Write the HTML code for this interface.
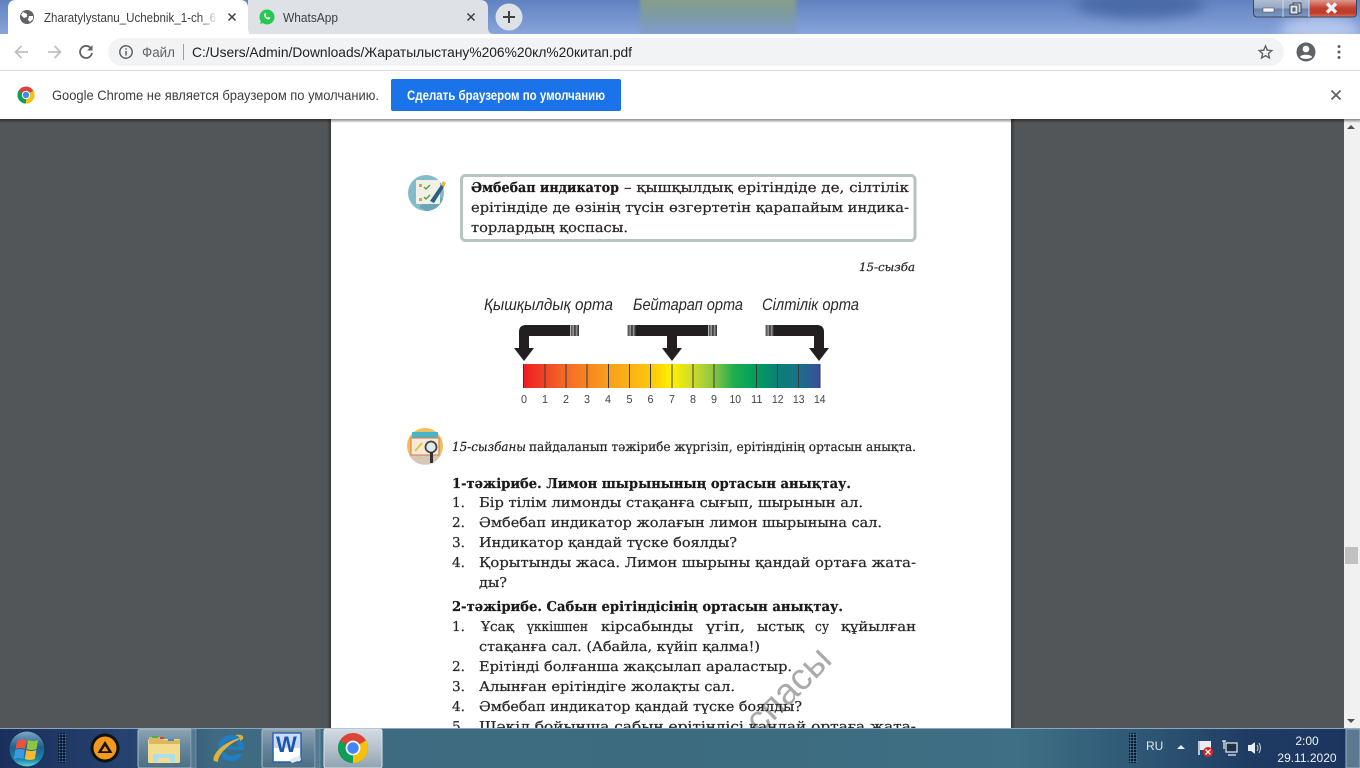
<!DOCTYPE html>
<html><head><meta charset="utf-8"><title>PDF</title>
<style>
html,body{margin:0;padding:0;width:1360px;height:768px;overflow:hidden;background:#525659}
svg{display:block}
.ui{font-family:"Liberation Sans",sans-serif;fill:#3c4043}
.s{font-family:"DejaVu Serif","Liberation Serif",serif;font-size:13.5px;fill:#262626;stroke:#262626;stroke-width:.22px;text-rendering:geometricPrecision}
.b{font-weight:bold;fill:#1a1a1a;stroke:#1a1a1a}
.i{font-style:italic}
.d{font-family:"Liberation Sans",sans-serif;font-style:italic;font-size:16.5px;fill:#2a2a2a;text-rendering:geometricPrecision}
.n{font-family:"Liberation Sans",sans-serif;font-size:11.5px;fill:#444;text-rendering:geometricPrecision}
</style></head><body>
<svg width="1360" height="768" viewBox="0 0 1360 768" xmlns="http://www.w3.org/2000/svg">
<defs>
<linearGradient id="sky" x1="0" y1="0" x2="0" y2="1"><stop offset="0" stop-color="#5f82c0"/><stop offset="1" stop-color="#88a4db"/></linearGradient>
<linearGradient id="green" x1="0" y1="0" x2="0" y2="1"><stop offset="0" stop-color="#8ca37a"/><stop offset=".55" stop-color="#7d9aa0"/><stop offset="1" stop-color="#7f9dd0"/></linearGradient>
<filter id="blur" x="-20%" y="-50%" width="140%" height="200%"><feGaussianBlur stdDeviation="6"/></filter>
<filter id="blur2" x="-20%" y="-50%" width="140%" height="200%"><feGaussianBlur stdDeviation="2"/></filter>
<linearGradient id="ph" x1="0" y1="0" x2="1" y2="0">
<stop offset="0" stop-color="#ed1c24"/><stop offset=".14" stop-color="#f26a27"/><stop offset=".29" stop-color="#f8a01c"/><stop offset=".43" stop-color="#fdc60c"/><stop offset=".5" stop-color="#fff200"/><stop offset=".57" stop-color="#cfdc2b"/><stop offset=".64" stop-color="#8dc63f"/><stop offset=".71" stop-color="#1fae4e"/><stop offset=".78" stop-color="#009f5b"/><stop offset=".86" stop-color="#0a8077"/><stop offset=".93" stop-color="#187189"/><stop offset="1" stop-color="#3f4c9b"/></linearGradient>
<linearGradient id="tb" x1="0" y1="0" x2="1" y2="0">
<stop offset="0" stop-color="#1a2f5c"/><stop offset=".1" stop-color="#274470"/><stop offset=".16" stop-color="#3f6b82"/><stop offset=".5" stop-color="#3c6b7f"/><stop offset=".75" stop-color="#3e6f84"/><stop offset=".85" stop-color="#2c5473"/><stop offset=".92" stop-color="#1f3b62"/><stop offset="1" stop-color="#1c3460"/></linearGradient>
<linearGradient id="btn" x1="0" y1="0" x2="0" y2="1"><stop offset="0" stop-color="#8ea4b4"/><stop offset=".5" stop-color="#64849a"/><stop offset="1" stop-color="#4d6f86"/></linearGradient>
<linearGradient id="btn2" x1="0" y1="0" x2="0" y2="1"><stop offset="0" stop-color="#d3dbe1"/><stop offset=".5" stop-color="#b4c2cc"/><stop offset="1" stop-color="#8ea3b2"/></linearGradient>
<linearGradient id="shade" x1="0" y1="0" x2="0" y2="1"><stop offset="0" stop-color="#000" stop-opacity=".45"/><stop offset="1" stop-color="#000" stop-opacity="0"/></linearGradient>
<linearGradient id="ls" x1="0" y1="0" x2="1" y2="0"><stop offset="0" stop-color="#000" stop-opacity=".35"/><stop offset="1" stop-color="#000" stop-opacity="0"/></linearGradient>
<linearGradient id="orb" x1="0" y1="0" x2="0" y2="1"><stop offset="0" stop-color="#7ea6c6"/><stop offset=".45" stop-color="#1f5f8e"/><stop offset=".8" stop-color="#1d86a8"/><stop offset="1" stop-color="#5fd0e0"/></linearGradient>
<linearGradient id="close" x1="0" y1="0" x2="0" y2="1"><stop offset="0" stop-color="#dc9a8e"/><stop offset=".5" stop-color="#c2402f"/><stop offset=".8" stop-color="#c23a2c"/><stop offset="1" stop-color="#d8705e"/></linearGradient>
<linearGradient id="wb" x1="0" y1="0" x2="0" y2="1"><stop offset="0" stop-color="#b4c0d4"/><stop offset=".5" stop-color="#98a8c2"/><stop offset=".55" stop-color="#6a84ad"/><stop offset="1" stop-color="#7f98c4"/></linearGradient>
<linearGradient id="fade" x1="0" y1="0" x2="1" y2="0"><stop offset="0" stop-color="#fff" stop-opacity="0"/><stop offset="1" stop-color="#fff"/></linearGradient>
<linearGradient id="stL" x1="0" y1="0" x2="1" y2="0"><stop offset="0" stop-color="#222"/><stop offset=".3" stop-color="#999"/><stop offset=".45" stop-color="#222"/><stop offset=".65" stop-color="#aaa"/><stop offset=".8" stop-color="#444"/><stop offset="1" stop-color="#ddd"/></linearGradient>
<linearGradient id="stR" x1="1" y1="0" x2="0" y2="0"><stop offset="0" stop-color="#222"/><stop offset=".3" stop-color="#999"/><stop offset=".45" stop-color="#222"/><stop offset=".65" stop-color="#aaa"/><stop offset=".8" stop-color="#444"/><stop offset="1" stop-color="#ddd"/></linearGradient>
<pattern id="dots" width="3" height="3" patternUnits="userSpaceOnUse"><rect width="2" height="2" fill="#0d1a30"/><rect x="2" y="2" width="1" height="1" fill="#5a7590"/></pattern>
<g id="chrome">
<circle r="10" fill="#db4437"/>
<path d="M0,0L8.66,-5A10,10 0 0 1 0,10Z" fill="#f4c20d"/>
<path d="M0,0L0,10A10,10 0 0 1 -8.66,-5Z" fill="#0f9d58"/>
<circle r="4.9" fill="#fff"/><circle r="3.8" fill="#4285f4"/>
</g>
<clipPath id="vp"><rect x="0" y="119" width="1344" height="609"/></clipPath>
</defs>

<!-- title bar -->
<svg x="0" y="0" width="1360" height="34">
<rect width="1360" height="34" fill="url(#sky)"/>
<rect x="640" y="-10" width="156" height="44" fill="url(#green)" filter="url(#blur2)"/>
<ellipse cx="1140" cy="4" rx="65" ry="14" fill="#4a6aa8" filter="url(#blur)"/>
<ellipse cx="1320" cy="30" rx="40" ry="14" fill="#b4c6ec" filter="url(#blur)"/>
</svg>
<path d="M0,34H8V8Q8,0 16,0H240Q248,0 248,8V26Q248,34 256,34H0Z" fill="#fff"/>
<path d="M248,0H480Q488,0 488,8V28Q488,34 494,34H248Q250,34 248,30Z" fill="#dee1e6"/>
<circle cx="509" cy="17" r="13.5" fill="#dee1e6"/>
<path d="M509,11V23M503,17H515" stroke="#3c4043" stroke-width="2"/>
<circle cx="27" cy="17" r="7" fill="#5f6368"/>
<path d="M23,12l4,2 0,3 -3,1 -3,-3zM29,16l4,0 0,3 -3,3 -2,-2z" fill="#fff"/>
<text class="ui" x="44" y="22" font-size="13" textLength="172" lengthAdjust="spacingAndGlyphs">Zharatylystanu_Uchebnik_1-ch_6</text>
<rect x="200" y="8" width="18" height="18" fill="url(#fade)"/>
<path d="M228.500,13.500l7,7M235.500,13.500l-7,7" stroke="#3c4043" stroke-width="1.500"/>
<circle cx="267" cy="17" r="7.500" fill="#25c94f"/><path d="M260,24l1.500,-4.500 3,3z" fill="#25c94f"/>
<path d="M264.500,13.500c-1,1 -.5,3 1,4.500s3.500,2 4.500,1l.3,-1.300 -1.700,-.8 -.8,.8c-1,-.3 -2,-1.300 -2.300,-2.300l.8,-.8 -.8,-1.700z" fill="#fff"/>
<text class="ui" x="283" y="22" font-size="13" textLength="55" lengthAdjust="spacingAndGlyphs">WhatsApp</text>
<path d="M467.500,13.500l7,7M474.500,13.500l-7,7" stroke="#3c4043" stroke-width="1.500"/>
<!-- window buttons -->
<path d="M1253.500,-1H1356.500V13Q1356.500,17 1352.500,17H1257.500Q1253.500,17 1253.500,13Z" fill="url(#wb)" stroke="#39465c" stroke-width="1"/>
<path d="M1309,0H1356V13Q1356,16.500 1352.500,16.500H1309Z" fill="url(#close)"/>
<path d="M1283,0V17M1309,0V17" stroke="#dfe7f0" stroke-width=".8"/>
<rect x="1263" y="8" width="11" height="4" fill="#f3f5f8" stroke="#445" stroke-width=".5"/>
<rect x="1293" y="3" width="8" height="10" fill="#c7d0de" stroke="#334" stroke-width=".9"/>
<rect x="1290" y="5" width="8" height="9" fill="#dfe5ee" stroke="#334" stroke-width=".9"/>
<rect x="1292.500" y="7.500" width="3" height="4" fill="#567"/>
<path d="M1327,3.500l9,9M1336,3.500l-9,9" stroke="#f2f2f2" stroke-width="3.400"/>

<!-- toolbar -->
<rect y="34" width="1360" height="36" fill="#fff"/>
<rect y="70" width="1360" height="1" fill="#dadce0"/>
<path d="M28,52H16M21.500,46l-6,6 6,6" fill="none" stroke="#bdc1c6" stroke-width="1.800"/>
<path d="M48,52H60M54.500,46l6,6 -6,6" fill="none" stroke="#bdc1c6" stroke-width="1.800"/>
<path d="M91,48.500A6,6 0 1 0 92,53" fill="none" stroke="#5f6368" stroke-width="1.800"/><path d="M92.500,45v5.500h-5.500z" fill="#5f6368"/>
<rect x="108" y="38" width="1176" height="28" rx="14" fill="#f1f3f4"/>
<circle cx="126" cy="52" r="6.200" fill="none" stroke="#5f6368" stroke-width="1.500"/>
<path d="M126,51v4.500M126,48.300v1.500" stroke="#5f6368" stroke-width="1.500"/>
<text class="ui" x="142" y="57" font-size="13.500" textLength="33" lengthAdjust="spacingAndGlyphs" style="fill:#5f6368">Файл</text>
<rect x="183" y="44" width="1" height="16" fill="#9aa0a6"/>
<text class="ui" x="192" y="57" font-size="14" textLength="440" lengthAdjust="spacingAndGlyphs" style="fill:#202124">C:/Users/Admin/Downloads/Жаратылыстану%206%20кл%20китап.pdf</text>
<path d="M1265.500,46l1.800,4.200 4.500,.4 -3.400,3 1,4.400 -3.900,-2.300 -3.900,2.300 1,-4.400 -3.400,-3 4.500,-.4z" fill="none" stroke="#5f6368" stroke-width="1.400"/>
<circle cx="1306" cy="52" r="9.500" fill="#5f6368"/><circle cx="1306" cy="49" r="3.300" fill="#fff"/><path d="M1300,57c1,-3 11,-3 12,0c-2,2.500 -10,2.500 -12,0z" fill="#fff"/>
<circle cx="1339" cy="46.500" r="1.500" fill="#5f6368"/><circle cx="1339" cy="52" r="1.500" fill="#5f6368"/><circle cx="1339" cy="57.500" r="1.500" fill="#5f6368"/>

<!-- infobar -->
<rect y="71" width="1360" height="48" fill="#fff"/>
<use href="#chrome" transform="translate(26,95) scale(.85)"/>
<text class="ui" x="52" y="100" font-size="14" textLength="327" lengthAdjust="spacingAndGlyphs">Google Chrome не является браузером по умолчанию.</text>
<rect x="391" y="79" width="230" height="32" rx="2" fill="#1a73e8"/>
<text class="ui" x="407" y="100" font-size="13.500" font-weight="bold" textLength="198" lengthAdjust="spacingAndGlyphs" style="fill:#fff">Сделать браузером по умолчанию</text>
<path d="M1331.500,90.500l9,9M1340.500,90.500l-9,9" stroke="#5f6368" stroke-width="1.800"/>

<!-- viewer -->
<rect y="119" width="1344" height="609" fill="#525659"/>
<rect x="331" y="119" width="680" height="609" fill="#fff"/>
<rect x="1011" y="119" width="4" height="609" fill="url(#ls)"/>
<rect x="327" y="119" width="4" height="609" fill="url(#ls)" transform="rotate(180 329 423.500)"/>
<rect x="1344" y="119" width="16" height="609" fill="#f1f1f1"/>
<rect x="1345" y="547" width="13" height="17" fill="#c1c1c1"/>
<path d="M1351,125l4,4h-8z" fill="#505050"/><path d="M1351,723l4,-4h-8z" fill="#505050"/>
<rect y="119" width="1360" height="4" fill="url(#shade)"/>

<g clip-path="url(#vp)">
<!-- watermark -->
<text x="0" y="0" transform="translate(760,735) rotate(-45)" font-family="Liberation Sans,sans-serif" font-size="37" fill="#aaaaaa" textLength="104" lengthAdjust="spacingAndGlyphs">спасы</text>
<!-- icon 1 -->
<circle cx="426" cy="193" r="18" fill="#82bcc9"/>
<path d="M426,211a18,18 0 0 0 17,-12l-8,-4 -16,12z" fill="#6aa6b4"/>
<rect x="416" y="180" width="24" height="24" rx="1" fill="#f2f0e6"/>
<path d="M419,184h3v3h-3zM419,198h3v3h-3z" fill="#d9a23b"/>
<path d="M424,187l2,2 4,-4M424,197l2,2 4,-4" stroke="#4aa84a" stroke-width="1.500" fill="none"/>
<path d="M430,201l11,-16 3,2 -10,16z" fill="#2d5e85"/><path d="M441,185l2,-4 3,2 -2,4z" fill="#e9b33c"/>

<!-- definition box -->
<rect x="461.500" y="175.500" width="453.500" height="65" rx="4" fill="#fff" stroke="#b6c5c1" stroke-width="3"/>
<text class="s b" x="471" y="192" textLength="148" lengthAdjust="spacingAndGlyphs">Әмбебап индикатор</text>
<text class="s" x="624" y="192" textLength="285" lengthAdjust="spacingAndGlyphs">– қышқылдық ерітіндіде де, сілтілік</text>
<text class="s" x="471" y="212" textLength="438" lengthAdjust="spacingAndGlyphs">ерітіндіде де өзінің түсін өзгертетін қарапайым индика-</text>
<text class="s" x="471" y="232" textLength="157" lengthAdjust="spacingAndGlyphs">торлардың қоспасы.</text>
<text class="s i" x="859" y="271" style="font-size:11.500px" textLength="56" lengthAdjust="spacingAndGlyphs">15-сызба</text>

<!-- diagram -->
<text class="d" x="484" y="310" textLength="129" lengthAdjust="spacingAndGlyphs">Қышқылдық орта</text>
<text class="d" x="633" y="310" textLength="110" lengthAdjust="spacingAndGlyphs">Бейтарап орта</text>
<text class="d" x="762" y="310" textLength="97" lengthAdjust="spacingAndGlyphs">Сілтілік орта</text>
<path d="M570,325H526Q519,325 519,332V348H514L524,361 534,348H529V336H570Z" fill="#231f20"/>
<rect x="570" y="325" width="9" height="11" fill="url(#stR)"/>
<path d="M636,325H708V336H677V348H682L672,361 662,348H667V336H636Z" fill="#231f20"/>
<rect x="627" y="325" width="9" height="11" fill="url(#stL)" transform="rotate(180 631.500 330.500)"/>
<rect x="708" y="325" width="9" height="11" fill="url(#stR)"/>
<path d="M774,325H817Q824,325 824,332V348H829L819,361 809,348H814V336H774Z" fill="#231f20"/>
<rect x="765" y="325" width="9" height="11" fill="url(#stL)" transform="rotate(180 769.500 330.500)"/>
<rect x="523" y="364" width="297" height="24" fill="url(#ph)"/>
<path d="M523.500,364v24M545,364v24M566,364v24M587,364v24M608.500,364v24M629.500,364v24M650.500,364v24M672,364v24M693,364v24M714,364v24M756.500,364v24M777.500,364v24M798.500,364v24M820,364v24" stroke="#3a3a3a" stroke-width="1"/>
<g text-anchor="start">
<text class="n" x="521" y="403" textLength="6" lengthAdjust="spacingAndGlyphs">0</text><text class="n" x="542" y="403" textLength="6" lengthAdjust="spacingAndGlyphs">1</text><text class="n" x="563" y="403" textLength="6" lengthAdjust="spacingAndGlyphs">2</text><text class="n" x="584" y="403" textLength="6" lengthAdjust="spacingAndGlyphs">3</text><text class="n" x="605" y="403" textLength="6" lengthAdjust="spacingAndGlyphs">4</text><text class="n" x="626.500" y="403" textLength="6" lengthAdjust="spacingAndGlyphs">5</text><text class="n" x="647.500" y="403" textLength="6" lengthAdjust="spacingAndGlyphs">6</text><text class="n" x="669" y="403" textLength="6" lengthAdjust="spacingAndGlyphs">7</text><text class="n" x="690" y="403" textLength="6" lengthAdjust="spacingAndGlyphs">8</text><text class="n" x="711" y="403" textLength="6" lengthAdjust="spacingAndGlyphs">9</text><text class="n" x="729.500" y="403" textLength="11.500" lengthAdjust="spacingAndGlyphs">10</text><text class="n" x="751" y="403" textLength="11.500" lengthAdjust="spacingAndGlyphs">11</text><text class="n" x="772" y="403" textLength="11.500" lengthAdjust="spacingAndGlyphs">12</text><text class="n" x="793" y="403" textLength="11.500" lengthAdjust="spacingAndGlyphs">13</text><text class="n" x="814" y="403" textLength="11.500" lengthAdjust="spacingAndGlyphs">14</text>
</g>

<!-- icon 2 -->
<circle cx="425" cy="446" r="18" fill="#efc05a"/>
<path d="M409,454h32v1a18,18 0 0 1 -32,0z" fill="#d5c9b5"/>
<rect x="412" y="432" width="26" height="6" fill="#49b3c7"/>
<rect x="411" y="438" width="28" height="17" fill="#f5ead6" stroke="#d9744f" stroke-width="1"/>
<path d="M415,451l7,-8" stroke="#e8c23a" stroke-width="2"/>
<circle cx="431" cy="447" r="5.500" fill="#dfeaea" stroke="#444" stroke-width="1.800"/>
<rect x="430" y="452" width="3" height="11" fill="#333"/>

<text class="s i" x="452" y="451" style="font-size:12.500px" textLength="74" lengthAdjust="spacingAndGlyphs">15-сызбаны</text>
<text class="s" x="529" y="451" style="font-size:12.500px" textLength="387" lengthAdjust="spacingAndGlyphs">пайдаланып тәжірибе жүргізіп, ерітіндінің ортасын анықта.</text>

<text class="s b" x="452" y="488" textLength="399" lengthAdjust="spacingAndGlyphs">1-тәжірибе. Лимон шырынының ортасын анықтау.</text>
<text class="s" x="452" y="507" textLength="13" lengthAdjust="spacingAndGlyphs">1.</text>
<text class="s" x="479" y="507" textLength="384" lengthAdjust="spacingAndGlyphs">Бір тілім лимонды стақанға сығып, шырынын ал.</text>
<text class="s" x="452" y="527" textLength="13" lengthAdjust="spacingAndGlyphs">2.</text>
<text class="s" x="479" y="527" textLength="403" lengthAdjust="spacingAndGlyphs">Әмбебап индикатор жолағын лимон шырынына сал.</text>
<text class="s" x="452" y="547" textLength="13" lengthAdjust="spacingAndGlyphs">3.</text>
<text class="s" x="479" y="547" textLength="258" lengthAdjust="spacingAndGlyphs">Индикатор қандай түске боялды?</text>
<text class="s" x="452" y="567" textLength="13" lengthAdjust="spacingAndGlyphs">4.</text>
<text class="s" x="479" y="567" textLength="437" lengthAdjust="spacingAndGlyphs">Қорытынды жаса. Лимон шырыны қандай ортаға жата-</text>
<text class="s" x="479" y="587" textLength="28" lengthAdjust="spacingAndGlyphs">ды?</text>

<text class="s b" x="452" y="611" textLength="391" lengthAdjust="spacingAndGlyphs">2-тәжірибе. Сабын ерітіндісінің ортасын анықтау.</text>
<text class="s" x="452" y="631" textLength="13" lengthAdjust="spacingAndGlyphs">1.</text>
<text class="s" x="481" y="631" textLength="33" lengthAdjust="spacingAndGlyphs">Ұсақ</text>
<text class="s" x="527" y="631" textLength="61" lengthAdjust="spacingAndGlyphs">үккішпен</text>
<text class="s" x="601" y="631" textLength="92" lengthAdjust="spacingAndGlyphs">кірсабынды</text>
<text class="s" x="706" y="631" textLength="39" lengthAdjust="spacingAndGlyphs">үгіп,</text>
<text class="s" x="757" y="631" textLength="47" lengthAdjust="spacingAndGlyphs">ыстық</text>
<text class="s" x="815" y="631" textLength="14" lengthAdjust="spacingAndGlyphs">су</text>
<text class="s" x="841" y="631" textLength="75" lengthAdjust="spacingAndGlyphs">құйылған</text>
<text class="s" x="479" y="651" textLength="281" lengthAdjust="spacingAndGlyphs">стақанға сал. (Абайла, күйіп қалма!)</text>
<text class="s" x="452" y="671" textLength="13" lengthAdjust="spacingAndGlyphs">2.</text>
<text class="s" x="479" y="671" textLength="313" lengthAdjust="spacingAndGlyphs">Ерітінді болғанша жақсылап араластыр.</text>
<text class="s" x="452" y="691" textLength="13" lengthAdjust="spacingAndGlyphs">3.</text>
<text class="s" x="479" y="691" textLength="256" lengthAdjust="spacingAndGlyphs">Алынған ерітіндіге жолақты сал.</text>
<text class="s" x="452" y="711" textLength="13" lengthAdjust="spacingAndGlyphs">4.</text>
<text class="s" x="479" y="711" textLength="323" lengthAdjust="spacingAndGlyphs">Әмбебап индикатор қандай түске боялды?</text>
<text class="s" x="452" y="731" textLength="13" lengthAdjust="spacingAndGlyphs">5.</text>
<text class="s" x="479" y="731" textLength="437" lengthAdjust="spacingAndGlyphs">Шәкіл бойынша сабын ерітіндісі қандай ортаға жата-</text>
</g>

<!-- taskbar -->
<rect y="728" width="1360" height="40" fill="url(#tb)"/>
<rect y="728" width="1360" height="1" fill="#8ea6bc"/>
<circle cx="27" cy="749" r="18.500" fill="#16304a"/>
<circle cx="27" cy="749" r="17.500" fill="url(#orb)"/>
<path d="M17,741q5,-3 9.500,-1l-1.500,9q-5,-2 -9.500,0z" fill="#e8533a"/>
<path d="M28,740q5,2 10,0l-1.500,9q-5,2 -10,0z" fill="#8cc63f"/>
<path d="M15.300,750q5,-2 9.500,0l-1.500,9q-5,-2 -9.500,0z" fill="#3c9be0"/>
<path d="M26.300,750q5,2 10,0l-1.500,9q-5,2 -10,0z" fill="#f5b82e"/>
<rect x="58" y="733" width="8" height="30" fill="url(#dots)"/>
<circle cx="105" cy="748" r="14.500" fill="#111"/><circle cx="105" cy="748" r="11.500" fill="#f39a1c"/>
<path d="M105,741l7.500,12h-15zM105,746l-3.500,5.300h7z" fill="#1a1208" fill-rule="evenodd"/>
<rect x="138" y="729" width="53" height="39" rx="2" fill="url(#btn)" stroke="#a9bcc9" stroke-width="1"/>
<rect x="191" y="729" width="5" height="39" fill="#557a90" stroke="#8ba0ae" stroke-width=".6"/>
<rect x="148" y="739" width="32" height="24" rx="1.500" fill="#f4dc8f"/>
<path d="M149,737h12l2,3h17v4h-31z" fill="#dcb95c"/>
<rect x="152" y="736" width="6" height="2" fill="#4caf50"/><rect x="160" y="737" width="4" height="2" fill="#d9432f"/><rect x="168" y="739" width="6" height="2" fill="#3a8fd8"/>
<path d="M153,762v-6q0,-2 2,-2h18q2,0 2,2v6h-5v-4h-12v4z" fill="#a9e0ee"/>
<circle cx="231" cy="748" r="10.500" fill="none" stroke="#1f7fc4" stroke-width="5"/>
<rect x="221" y="746.500" width="20" height="3" fill="#1f7fc4"/>
<rect x="233" y="750" width="12" height="4" fill="#3c6b7f"/>
<path d="M214,761c-3,-5 8,-20 30,-24c-18,8 -26,18 -26,25z" fill="#e0b23a"/>
<path d="M235,735c5,-1 9,0 8,4l-3,2c1,-3 -2,-5 -5,-6z" fill="#e0b23a"/>
<rect x="262" y="729" width="53" height="39" rx="2" fill="url(#btn)" stroke="#a9bcc9" stroke-width="1"/>
<rect x="315" y="729" width="5" height="39" fill="#557a90" stroke="#8ba0ae" stroke-width=".6"/>
<rect x="273" y="733" width="28" height="29" fill="#fff" stroke="#2a5fae" stroke-width="1.500"/>
<rect x="274" y="734" width="26" height="14" fill="#2f6fd0" fill-opacity=".25"/>
<text x="276" y="752" font-family="Liberation Sans,sans-serif" font-weight="bold" font-size="22" fill="#1c56b0">W</text>
<path d="M289,760l11,-5 1,5 -9,3z" fill="#e4e8ee"/>
<rect x="324" y="729" width="58" height="39" rx="2" fill="url(#btn2)" stroke="#dde4ea" stroke-width="1"/>
<use href="#chrome" transform="translate(353,748) scale(1.500)"/>

<!-- tray -->
<rect x="1129" y="733" width="8" height="30" fill="url(#dots)"/>
<text x="1146" y="750" font-family="Liberation Sans,sans-serif" font-size="12" fill="#dfe7ee">RU</text>
<path d="M1181,745l4,4h-8z" fill="#e8edf2"/>
<path d="M1199,741v14" stroke="#eee" stroke-width="1.500"/><path d="M1200,741h11v9h-11z" fill="#e8edf2"/>
<circle cx="1208" cy="752" r="5" fill="#d22"/><path d="M1205.500,749.500l5,5M1210.500,749.500l-5,5" stroke="#fff" stroke-width="1.300"/>
<rect x="1226" y="743" width="11" height="9" fill="#1d3348" stroke="#e8edf2" stroke-width="1.200"/>
<path d="M1224,741v8M1222,741h4M1228,755h8" stroke="#e8edf2" stroke-width="1.300"/>
<path d="M1248,745h3l4,-3v12l-4,-3h-3z" fill="#e8edf2"/>
<path d="M1257,745q2,3 0,6M1259,743q3,5 0,10" stroke="#cfd8e0" fill="none"/>
<text x="1307" y="745" text-anchor="middle" font-family="Liberation Sans,sans-serif" font-size="12" fill="#eef2f6">2:00</text>
<text x="1307" y="762" text-anchor="middle" font-family="Liberation Sans,sans-serif" font-size="12" fill="#eef2f6">29.11.2020</text>
<rect x="1346" y="729" width="14" height="39" fill="#5c7790" stroke="#9db0c0" stroke-width="1"/>
</svg>
</body></html>
